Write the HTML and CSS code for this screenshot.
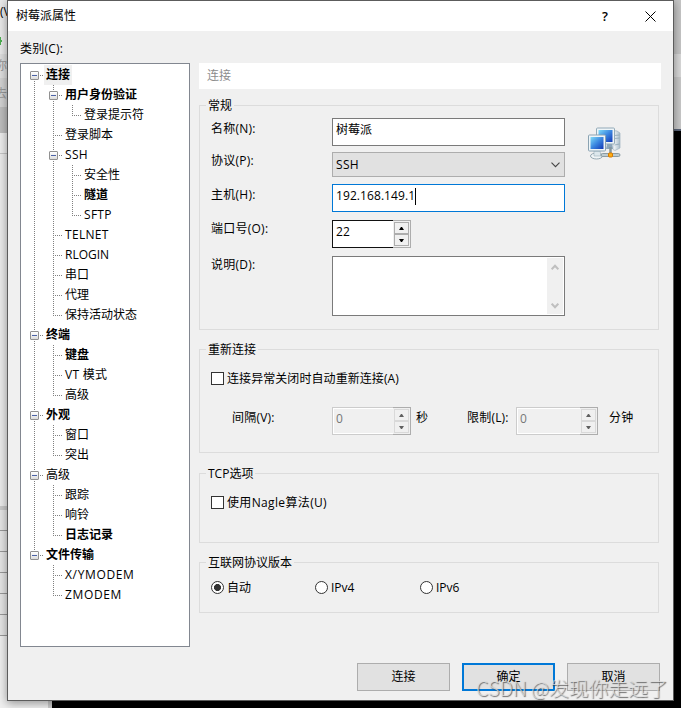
FILE: index.html
```html
<!DOCTYPE html>
<html lang="zh-CN">
<head>
<meta charset="utf-8">
<title>树莓派属性</title>
<link rel="stylesheet" href="styles.css">
</head>
<body>
<div class="desktop">
  <div class="app-left">
    <div class="strip menu">(V</div>
    <div class="strip tools"><svg width="2" height="8" viewBox="0 0 2 8"><path d="M0 3h2v2H0zM0 0h1v8H0z" fill="#4caf50"/></svg></div>
    <div class="strip addr">你</div>
    <div class="strip tabs">去</div>
    <div class="strip bar"></div>
    <div class="strip head"></div>
    <div class="strip body"></div>
    <div class="strip rows"></div>
  </div>
  <div class="app-right"></div>
</div>

<main class="window">
  <header class="titlebar">
    <h1>树莓派属性</h1>
    <span class="help">?</span>
    <svg class="close" width="11" height="11" viewBox="0 0 11 11"><path d="M.5 .5l10 10M10.5 .5l-10 10" stroke="#000" stroke-width="1" fill="none"/></svg>
  </header>
  <div class="caption">类别(C):</div>
  <div class="content">
    <nav class="tree">
      <div class="row"><i class="e first"></i><b class="sel">连接</b></div>
      <div class="row"><i class="v"></i><i class="e"></i><b>用户身份验证</b></div>
      <div class="row"><i class="v"></i><i class="v"></i><i class="l"></i><span>登录提示符</span></div>
      <div class="row"><i class="v"></i><i class="t"></i><span>登录脚本</span></div>
      <div class="row"><i class="v"></i><i class="e"></i><span class="latin">SSH</span></div>
      <div class="row"><i class="v"></i><i class="v"></i><i class="t"></i><span>安全性</span></div>
      <div class="row"><i class="v"></i><i class="v"></i><i class="t"></i><b>隧道</b></div>
      <div class="row"><i class="v"></i><i class="v"></i><i class="l"></i><span class="latin">SFTP</span></div>
      <div class="row"><i class="v"></i><i class="t"></i><span class="latin">TELNET</span></div>
      <div class="row"><i class="v"></i><i class="t"></i><span>RLOGIN</span></div>
      <div class="row"><i class="v"></i><i class="t"></i><span>串口</span></div>
      <div class="row"><i class="v"></i><i class="t"></i><span>代理</span></div>
      <div class="row"><i class="v"></i><i class="l"></i><span>保持活动状态</span></div>
      <div class="row"><i class="e"></i><b>终端</b></div>
      <div class="row"><i class="v"></i><i class="t"></i><b>键盘</b></div>
      <div class="row"><i class="v"></i><i class="t"></i><span class="latin">VT 模式</span></div>
      <div class="row"><i class="v"></i><i class="l"></i><span>高级</span></div>
      <div class="row"><i class="e"></i><b>外观</b></div>
      <div class="row"><i class="v"></i><i class="t"></i><span>窗口</span></div>
      <div class="row"><i class="v"></i><i class="l"></i><span>突出</span></div>
      <div class="row"><i class="e"></i><span>高级</span></div>
      <div class="row"><i class="v"></i><i class="t"></i><span>跟踪</span></div>
      <div class="row"><i class="v"></i><i class="t"></i><span>响铃</span></div>
      <div class="row"><i class="v"></i><i class="l"></i><b>日志记录</b></div>
      <div class="row"><i class="e last"></i><b>文件传输</b></div>
      <div class="row"><i></i><i class="t"></i><span class="modem">X/YMODEM</span></div>
      <div class="row"><i></i><i class="l"></i><span class="modem">ZMODEM</span></div>
    </nav>

    <div class="panel">
      <div class="panel-head">连接</div>

      <section class="group general">
        <h2>常规</h2>
        <div class="general-body">
          <div class="fields">
            <div class="field"><label class="low">名称(N):</label><div class="input">树莓派</div></div>
            <div class="field"><label>协议(P):</label><div class="combo">SSH<svg width="9" height="6" viewBox="0 0 9 6"><path d="M.5 .7l4 4 4-4" stroke="#444" stroke-width="1.1" fill="none"/></svg></div></div>
            <div class="field host"><label class="low">主机(H):</label><div class="input focus">192.168.149.1<span class="caret"></span></div></div>
            <div class="field"><label>端口号(O):</label>
              <div class="spin"><div class="num">22</div><div class="arrows"><span><svg width="5" height="3" viewBox="0 0 5 3"><path d="M0 3h5L3 0H2z"/></svg></span><span><svg width="5" height="3" viewBox="0 0 5 3"><path d="M0 0h5L3 3H2z"/></svg></span></div></div>
            </div>
            <div class="field"><label>说明(D):</label><div class="area"><div class="scroll"><svg width="8" height="6" viewBox="0 0 8 6"><path d="M.7 5.3L4 1.8l3.3 3.5" stroke="#bfbfbf" stroke-width="2" fill="none"/></svg><svg width="8" height="6" viewBox="0 0 8 6"><path d="M.7 .7L4 4.2 7.3 .7" stroke="#bfbfbf" stroke-width="2" fill="none"/></svg></div></div></div>
          </div>
          <svg class="net" width="33" height="33" viewBox="0 0 33 33">
            <defs>
              <linearGradient id="scr" x1="0" y1="0" x2="1" y2="1"><stop offset="0" stop-color="#7fdcf8"/><stop offset=".5" stop-color="#3b86e0"/><stop offset="1" stop-color="#1238b4"/></linearGradient>
              <linearGradient id="case" x1="0" y1="0" x2="1" y2="0"><stop offset="0" stop-color="#fafcfd"/><stop offset="1" stop-color="#a9bdca"/></linearGradient>
            </defs>
            <path d="M25 3.5l4 .5 3 2v15l-5 2.500-2-1z" fill="url(#case)" stroke="#9fb3bf" stroke-width=".7"/>
            <path d="M26.500 8.500l5-.5M26.500 11.500l5-.5M26.500 18l5-1" stroke="#8da6b5" stroke-width=".8"/>
            <path d="M19 17h5l1 5h-7z" fill="#8ba6bb"/>
            <rect x="8.500" y="1" width="18" height="16" rx="1" fill="#eef5f8" stroke="#93aab8"/>
            <rect x="10.500" y="3" width="14" height="12" fill="url(#scr)"/>
            <ellipse cx="8.500" cy="29" rx="6" ry="3" fill="#eff4f6" stroke="#96a9b3"/>
            <path d="M6 24h6l1 5H6z" fill="#dce7ec" stroke="#9fb2bd" stroke-width=".6"/>
            <rect x=".5" y="8" width="17" height="16" rx="1" fill="#eef5f8" stroke="#8ba3b2"/>
            <rect x="2.500" y="10" width="13" height="12" fill="url(#scr)"/>
            <path d="M22.500 20v7" stroke="#84969e" stroke-width="2.500"/>
            <rect x="13" y="26.500" width="19" height="3" rx="1.500" fill="#bdcbd0" stroke="#788b94" stroke-width=".8"/>
            <rect x="20.500" y="26" width="4" height="4" rx="1" fill="#ffae12" stroke="#d77a00"/>
          </svg>
        </div>
      </section>

      <section class="group reconnect">
        <h2>重新连接</h2>
        <div class="check"><i class="box"></i>连接异常关闭时自动重新连接(A)</div>
        <div class="limits">
          <span class="w-interval">间隔(V):</span>
          <div class="spin off"><div class="num">0</div><div class="arrows"><span><svg width="5" height="3" viewBox="0 0 5 3"><path d="M0 3h5L3 0H2z"/></svg></span><span><svg width="5" height="3" viewBox="0 0 5 3"><path d="M0 0h5L3 3H2z"/></svg></span></div></div>
          <span class="w-sec">秒</span>
          <span class="w-limit">限制(L):</span>
          <div class="spin off wide"><div class="num">0</div><div class="arrows"><span><svg width="5" height="3" viewBox="0 0 5 3"><path d="M0 3h5L3 0H2z"/></svg></span><span><svg width="5" height="3" viewBox="0 0 5 3"><path d="M0 0h5L3 3H2z"/></svg></span></div></div>
          <span class="w-min">分钟</span>
        </div>
      </section>

      <section class="group tcp">
        <h2>TCP选项</h2>
        <div class="check"><i class="box"></i>使用Nagle算法(U)</div>
      </section>

      <section class="group ip">
        <h2>互联网协议版本</h2>
        <div class="radios">
          <div class="check"><i class="dot on"></i>自动</div>
          <div class="check"><i class="dot"></i>IPv4</div>
          <div class="check"><i class="dot"></i>IPv6</div>
        </div>
      </section>
    </div>
  </div>
  <footer class="buttons">
    <button>连接</button>
    <button class="default">确定</button>
    <button>取消</button>
  </footer>
</main>
<div class="watermark">CSDN @发现你走远了</div>
</body>
</html>
```
FILE: styles.css
```css
*, *::before { box-sizing: border-box; }
body {
  margin: 0;
  width: 681px;
  height: 708px;
  overflow: hidden;
  position: relative;
  background: #000;
  color: #000;
  font: 12px/16px "Open Sans", "Noto Sans CJK SC", sans-serif;
}
h1, h2 { margin: 0; font-size: 12px; font-weight: 400; }

/* Applications behind the dialog */
.desktop { display: flex; justify-content: space-between; height: 708px; }
.app-left { width: 52px; background: #efefef; border-right: 4px solid #ccc; }
.app-right {
  width: 12px;
  height: 131px;
  border-bottom: 2px solid #5a6478;
  background: linear-gradient(#c6c6c6 54px, #d9d9d9 54px 77px, #c9c9c9 77px);
}
.strip { overflow: hidden; white-space: nowrap; }
.menu { height: 32px; padding-top: 4px; background: #e9e9e9; }
.tools { display: flex; height: 22px; padding-top: 5px; background: #e9e9e9; }
.addr { height: 24px; padding-top: 4px; color: #999; text-indent: -5px; background: #dedede; }
.tabs { height: 29px; padding-top: 8px; color: #999; text-indent: -5px; background: #d2d2d2; }
.bar { height: 26px; background: #bdbdbd; }
.head { height: 21px; background: #ededed; border-bottom: 1px solid #c6c6c6; }
.body { height: 352px; background: #ebebeb; }
.rows {
  height: 130px;
  border-top: 4px solid #c9c9c9;
  background: repeating-linear-gradient(#e5e5e5 0 20px, #999 20px 21px);
}

/* Dialog window */
.window {
  position: absolute;
  left: 7px;
  top: 0;
  width: 667px;
  height: 701px;
  border: 1px solid #5c5c5c;
  background: #f0f0f0;
  box-shadow: 0 2px 9px rgba(0, 0, 0, .4);
}
.titlebar { display: flex; align-items: center; height: 30px; padding: 0 17px 0 8px; background: #fff; }
.titlebar h1 { flex: 1; }
.help { width: 8px; margin-right: 35px; font-size: 13px; font-weight: 600; }
.caption { height: 32px; padding: 10px 12px 0; letter-spacing: .2px; }
.content { display: flex; gap: 9px; padding-left: 12px; height: 584px; }

/* Category tree */
.tree { width: 170px; padding: 1px 0 0 4px; border: 1px solid #828790; background: #fff; }
.row { display: flex; height: 20px; line-height: 20px; white-space: nowrap; }
.row span, .row b { padding: 0 2px; }
.row b { font-weight: 700; }
.row .sel { background: #f0f0f0; }
.row .latin { letter-spacing: .3px; }
.row .modem { letter-spacing: .65px; }
.row i {
  --v: repeating-linear-gradient(#808080 0 1px, transparent 1px 2px);
  --h: repeating-linear-gradient(90deg, #808080 0 1px, transparent 1px 2px);
  position: relative;
  flex: 0 0 19px;
  background-repeat: no-repeat;
}
.row .v { background-image: var(--v); background-size: 1px 20px; background-position: 9px 0; }
.row .t { background-image: var(--v), var(--h); background-size: 1px 20px, 9px 1px; background-position: 9px 0, 9px 10px; }
.row .l { background-image: var(--v), var(--h); background-size: 1px 11px, 9px 1px; background-position: 9px 0, 9px 10px; }
.row .e { background-image: var(--v), var(--h); background-size: 1px 20px, 9px 1px; background-position: 9px 0, 9px 10px; }
.row .first { background-size: 1px 10px, 9px 1px; background-position: 9px 10px, 9px 10px; }
.row .last { background-size: 1px 10px, 9px 1px; }
.row .e::before {
  content: "";
  position: absolute;
  left: 5px;
  top: 6px;
  width: 9px;
  height: 9px;
  border: 1px solid #919191;
  border-radius: 1px;
  background: linear-gradient(#4b63a7, #4b63a7) center / 5px 1px no-repeat, linear-gradient(#fff, #ddd);
}

/* Settings panel */
.panel-head {
  width: 462px;
  height: 26px;
  padding-left: 8px;
  line-height: 26px;
  background: #fff;
  color: #8c8c8c;
}
.group { width: 460px; border: 1px solid #dcdcdc; padding-left: 11px; }
.group h2 { width: max-content; height: 16px; margin: -8px 0 0 -5px; padding: 0 2px; background: #f0f0f0; }
.general { height: 225px; margin-top: 16px; }
.reconnect { height: 104px; margin-top: 19px; }
.tcp { height: 70px; margin-top: 20px; }
.ip { height: 51px; margin-top: 19px; }
.general-body { display: flex; padding-top: 4px; }
.fields { display: flex; flex-direction: column; gap: 8px; width: 354px; }
.field { display: flex; }
.field label { width: 121px; padding-top: 1px; letter-spacing: .25px; }
.field .low { padding-top: 3px; }
.field:nth-child(2) { margin-top: -2px; }
.field:nth-child(3) { margin-top: -1px; }
.input, .combo, .area { width: 233px; }
.input { display: flex; height: 28px; padding: 3px; border: 1px solid #7a7a7a; background: #fff; }
.focus { border-color: #0078d7; letter-spacing: .08px; }
.caret { width: 1px; height: 17px; background: #000; }
.combo {
  display: flex;
  align-items: center;
  justify-content: space-between;
  height: 25px;
  padding: 0 4px 0 3px;
  border: 1px solid #adadad;
  background: #e1e1e1;
  letter-spacing: .3px;
}
.area { display: flex; justify-content: flex-end; height: 60px; padding: 1px; border: 1px solid #7a7a7a; background: #fff; }
.scroll { display: flex; flex-direction: column; justify-content: space-between; align-items: center; width: 16px; padding: 6px 0 5px; background: #f0f0f0; }
.net { margin: 9px 0 0 23px; }

.spin { display: flex; width: 79px; height: 28px; }
.num { flex: 1; padding: 3px; border: 1px solid #111; border-right: 0; background: #fff; letter-spacing: .2px; }
.arrows { display: flex; flex-direction: column; width: 18px; padding: 1px; border: 1px solid #adadad; border-left: 0; }
.arrows span { flex: 1; display: flex; align-items: center; justify-content: center; border: 1px solid #adadad; }
.off .num { color: #777; border-color: #ccc; background: #f0f0f0; box-shadow: inset 0 1px #fff, inset 0 -1px #fff, inset 1px 0 #fff; }
.off .arrows span { border-color: #d9d9d9; }
.off svg { fill: #606060; }
.wide { width: 82px; }

.check { display: flex; align-items: center; gap: 3px; height: 16px; }
.box, .dot { width: 13px; height: 13px; margin-bottom: 1px; border: 1px solid #333; background: #fff; }
.dot { border-radius: 50%; }
.on { background: radial-gradient(circle, #333 3.2px, #fff 3.8px); }
.reconnect .check { margin-top: 13px; letter-spacing: .07px; }
.tcp .check { margin-top: 13px; letter-spacing: .35px; }
.limits { display: flex; margin-top: 20px; line-height: 22px; letter-spacing: .2px; }
.limits .num { line-height: 16px; }
.w-interval { width: 121px; padding-left: 21px; }
.w-sec { width: 56px; padding-left: 5px; }
.w-limit { width: 49px; }
.w-min { padding-left: 11px; }
.radios { display: flex; padding-top: 9px; }
.radios .check { width: 104px; }
.radios .check:nth-child(2) { width: 105px; }

.buttons { display: flex; justify-content: flex-end; gap: 12px; padding: 16px 13px 0 0; }
.buttons button {
  width: 93px;
  height: 28px;
  padding: 0;
  border: 1px solid #adadad;
  background: #e1e1e1;
  font: inherit;
  color: #000;
}
.buttons .default { border: 2px solid #0078d7; }

.watermark {
  position: absolute;
  left: 476px;
  top: 674px;
  font: 19.8px/28px "Noto Sans CJK SC", sans-serif;
  font-weight: 300;
  white-space: nowrap;
  color: rgba(225, 225, 225, .75);
  text-shadow: 1px 1px 1px rgba(60, 60, 60, .75);
}
```
